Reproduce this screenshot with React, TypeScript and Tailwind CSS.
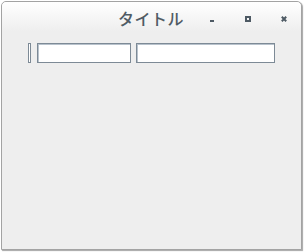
export default function App() {
  return (
    <div className="w-[304px] h-[252px] bg-white" style={{ fontFamily: '"Noto Sans CJK JP", "Noto Sans", sans-serif' }}>
      <div className="ml-px mt-px w-[301px] h-[249px] border border-[#a3a3a3] rounded-t-[5px] bg-[#eeeeee] shadow-[1px_1px_1px_rgba(0,0,0,0.35)] overflow-hidden flex flex-col">
        <div className="h-[30px] flex items-center bg-gradient-to-b from-white to-[#eeeeee] rounded-t-[4px]">
          <span className="ml-[116px] mt-[2px] text-[16px] leading-none font-medium text-[#505b65] tracking-[0.5px]">タイトル</span>
          <div className="flex-1" />
          <div className="flex items-center mr-[-1px]">
            <button className="w-9 h-[30px] flex items-center justify-center">
              <span className="block w-[4px] h-[2px] mt-[8px] bg-[#4e5a64]" />
            </button>
            <button className="w-9 h-[30px] flex items-center justify-center">
              <span className="block w-[6px] h-[6px] mt-[3px] border-2 border-[#4e5a64]" />
            </button>
            <button className="w-9 h-[30px] flex items-center justify-center">
              <svg width="6" height="6" viewBox="0 0 6 6" className="mt-[3px]">
                <path d="M0.8 0.8 L5.2 5.2 M5.2 0.8 L0.8 5.2" stroke="#4e5a64" strokeWidth="2" />
              </svg>
            </button>
          </div>
        </div>
        <div className="mt-[11px] pl-[26px] flex items-start">
          <input className="w-[3px] h-[20px] border border-[#7d8a96] bg-white outline-none" />
          <input className="ml-[6px] w-[94px] h-[20px] border border-[#7d8a96] bg-white outline-none shadow-[inset_1px_1px_0_#b8c2cc]" />
          <input className="ml-[5px] w-[139px] h-[20px] border border-[#7d8a96] bg-white outline-none shadow-[inset_1px_1px_0_#b8c2cc]" />
        </div>
      </div>
    </div>
  );
}
